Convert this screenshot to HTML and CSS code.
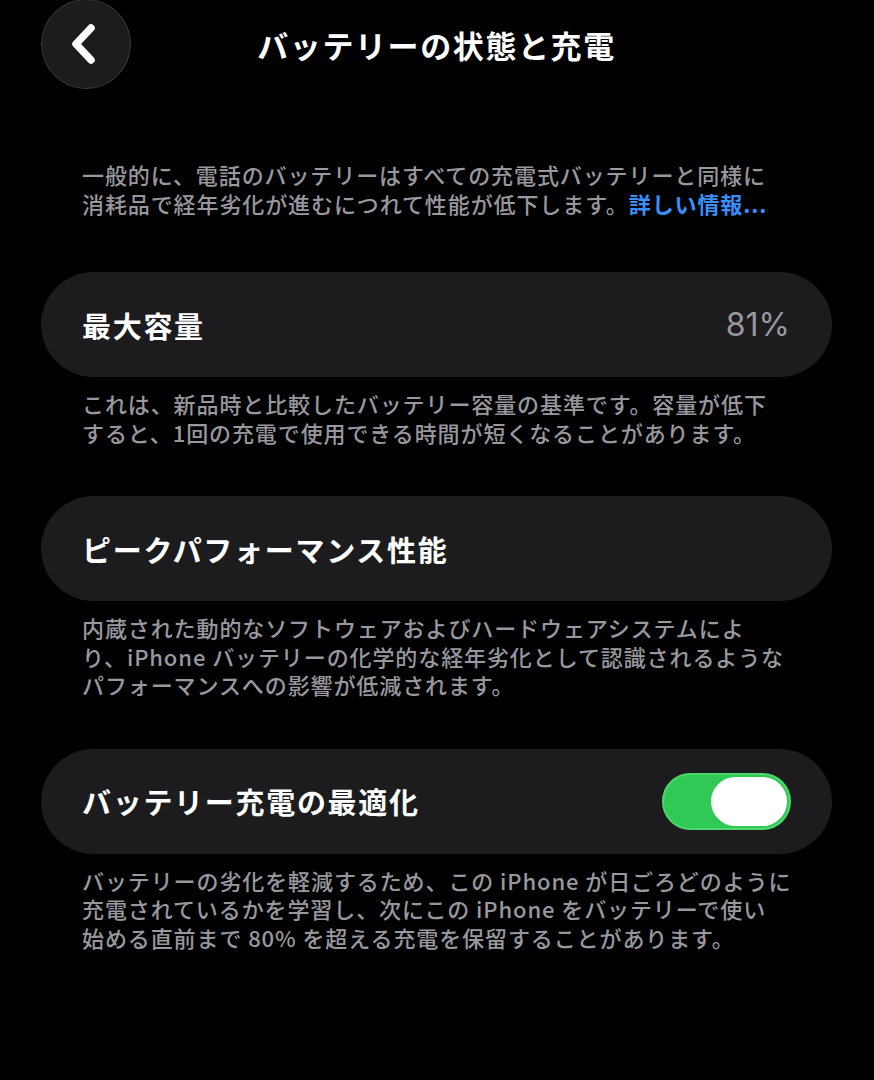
FILE: index.html
```html
<!DOCTYPE html>
<html lang="ja">
<head>
<meta charset="utf-8">
<link rel="stylesheet" href="styles.css">
</head>
<body>
<div class="page">
  <header class="header">
    <button class="back" aria-label="戻る">
      <svg width="40" height="44" viewBox="0 0 40 44"><path d="M27 6 L12 22 L27 38" fill="none" stroke="#fff" stroke-width="7.5" stroke-linecap="round" stroke-linejoin="round"/></svg>
    </button>
    <h1 class="title">バッテリーの状態と充電</h1>
  </header>

  <p class="intro">一般的に、電話のバッテリーはすべての充電式バッテリーと同様に<br>消耗品で経年劣化が進むにつれて性能が低下します。<span class="link">詳しい情報...</span></p>

  <section class="group">
    <div class="card">
      <span class="label">最大容量</span>
      <span class="value">81%</span>
    </div>
    <p class="note">これは、新品時と比較したバッテリー容量の基準です。容量が低下<br>すると、1回の充電で使用できる時間が短くなることがあります。</p>
  </section>

  <section class="group">
    <div class="card">
      <span class="label">ピークパフォーマンス性能</span>
    </div>
    <p class="note">内蔵された動的なソフトウェアおよびハードウェアシステムによ<br>り、iPhone バッテリーの化学的な経年劣化として認識されるような<br>パフォーマンスへの影響が低減されます。</p>
  </section>

  <section class="group">
    <div class="card">
      <span class="label">バッテリー充電の最適化</span>
      <span class="toggle"><span class="knob"></span></span>
    </div>
    <p class="note">バッテリーの劣化を軽減するため、この iPhone が日ごろどのように<br>充電されているかを学習し、次にこの iPhone をバッテリーで使い<br>始める直前まで 80% を超える充電を保留することがあります。</p>
  </section>
</div>
</body>
</html>
```

FILE: styles.css
```css
* { box-sizing: border-box; }
html, body {
  margin: 0;
  padding: 0;
  background: #000;
}
body {
  font-family: "Noto Sans CJK JP", "Noto Sans", sans-serif;
  color: #fff;
}
.page {
  width: 874px;
  height: 1080px;
  padding: 0 42px 0 41px;
}
.header {
  position: relative;
  height: 89px;
  display: flex;
  align-items: center;
  justify-content: center;
}
.back {
  position: absolute;
  left: 0;
  top: -1px;
  width: 90px;
  height: 90px;
  border-radius: 50%;
  background: #1c1c1e;
  border: 1.5px solid #3a3a3c;
  display: flex;
  align-items: center;
  justify-content: center;
  padding: 0 4px 0 0;
  margin: 0;
}
.title {
  margin: 0;
  font-size: 31px;
  font-weight: 700;
  letter-spacing: 1.6px;
  padding-left: 0;
}
.intro {
  margin: 71px 0 0;
  padding-left: 41px;
  font-size: 22px;
  line-height: 29px;
  letter-spacing: 0.9px;
  color: #98989e;
  font-weight: 500;
  white-space: nowrap;
}
.link {
  color: #3a8ef8;
  font-weight: 700;
}
.group {
  margin-top: 54px;
}
.group + .group {
  margin-top: 50px;
}
.card {
  height: 105px;
  border-radius: 53px;
  background: #1c1c1e;
  display: flex;
  align-items: center;
  justify-content: space-between;
  padding: 0 40px 0 41px;
}
.label {
  font-size: 29px;
  font-weight: 700;
  letter-spacing: 1.7px;
}
.value {
  font-family: "Inter", "Liberation Sans", sans-serif;
  font-size: 32px;
  color: #98989e;
  letter-spacing: 0;
  padding-right: 2px;
}
.toggle {
  width: 129px;
  height: 57px;
  border-radius: 29px;
  background: #30c955;
  border: 2px solid #4cd86c;
  display: flex;
  align-items: center;
  justify-content: flex-end;
  padding: 0 2px;
  margin-right: 1px;
}
.knob {
  width: 76px;
  height: 49px;
  border-radius: 25px;
  background: #fff;
}
.note {
  margin: 12px 0 0;
  padding-left: 41px;
  font-size: 22px;
  line-height: 28.5px;
  letter-spacing: 0.9px;
  color: #98989e;
  font-weight: 500;
  white-space: nowrap;
}
```
